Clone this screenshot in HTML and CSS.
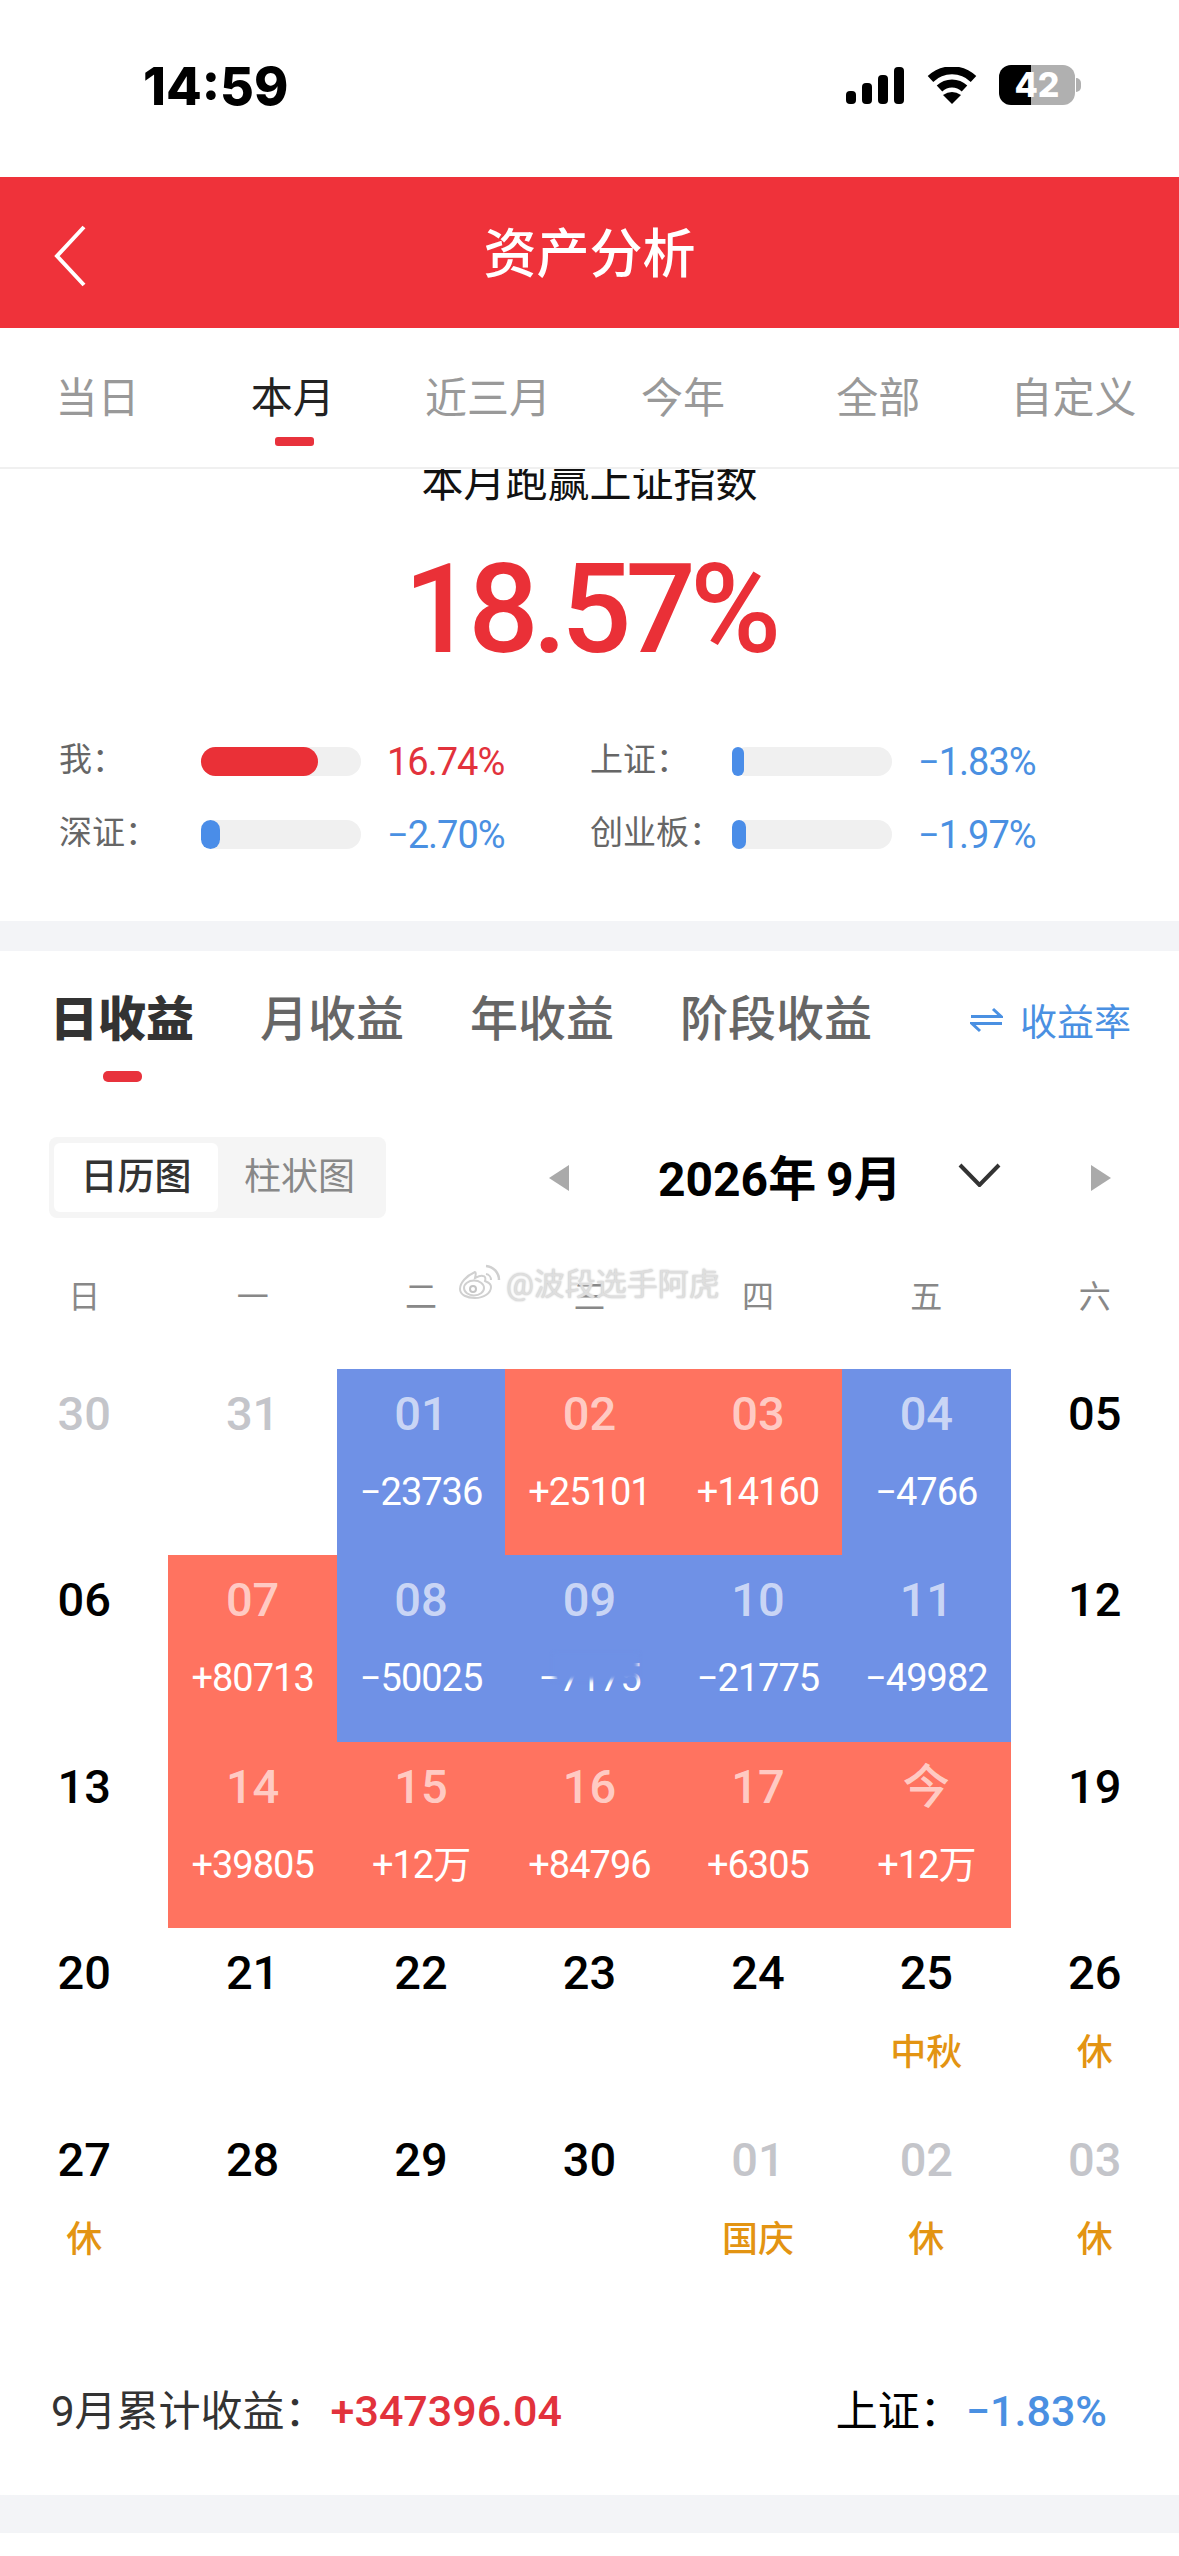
FILE: index.html
```html
<!DOCTYPE html>
<html lang="zh-CN">
<head>
    <meta charset="UTF-8">
    <meta name="viewport" content="width=device-width, initial-scale=1.0">
    <title>资产分析</title>
    <link rel="stylesheet" href="styles.css">
</head>
<body>

    <div class="status-bar">
        <div class="time">14:59</div>
        <div class="status-icons">
            <svg class="signal" width="58" height="37" viewBox="0 0 58 37">
                <rect x="0" y="24" width="10" height="13" rx="4"/>
                <rect x="16" y="16" width="10" height="21" rx="4"/>
                <rect x="32" y="8" width="10" height="29" rx="4"/>
                <rect x="48" y="0" width="10" height="37" rx="4"/>
            </svg>
            <svg class="wifi" width="50" height="37" viewBox="0 0 50 37">
                <path d="M3.5 12 A31 31 0 0 1 46.5 12" fill="none" stroke="#000" stroke-width="8"/>
                <path d="M12.5 21.5 A18 18 0 0 1 37.5 21.5" fill="none" stroke="#000" stroke-width="8"/>
                <path d="M25 37 L16 28 Q25 22 34 28 Z"/>
            </svg>
            <div class="battery">
                <div class="battery-body">42</div>
                <div class="battery-cap"></div>
            </div>
        </div>
    </div>

    <div class="nav">
        <svg class="back" width="34" height="62" viewBox="0 0 34 62">
            <path d="M31 2 L4 31 L31 60" fill="none" stroke="#fff" stroke-width="4"/>
        </svg>
        <div class="nav-title">资产分析</div>
    </div>

    <div class="period-tabs">
        <div class="period">当日</div>
        <div class="period active">本月<span class="period-mark"></span></div>
        <div class="period">近三月</div>
        <div class="period">今年</div>
        <div class="period">全部</div>
        <div class="period">自定义</div>
    </div>

    <div class="overview">
        <div class="overview-title">本月跑赢上证指数</div>
        <div class="overview-num">18.57%</div>
        <div class="stats">
            <div class="stat">
                <div class="stat-label">我：</div>
                <div class="bar"><div class="bar-fill red" style="width: 117px"></div></div>
                <div class="stat-val up">16.74%</div>
            </div>
            <div class="stat">
                <div class="stat-label">上证：</div>
                <div class="bar"><div class="bar-fill blue" style="width: 12px"></div></div>
                <div class="stat-val down">−1.83%</div>
            </div>
            <div class="stat">
                <div class="stat-label">深证：</div>
                <div class="bar"><div class="bar-fill blue" style="width: 19px"></div></div>
                <div class="stat-val down">−2.70%</div>
            </div>
            <div class="stat">
                <div class="stat-label">创业板：</div>
                <div class="bar"><div class="bar-fill blue" style="width: 14px"></div></div>
                <div class="stat-val down">−1.97%</div>
            </div>
        </div>
    </div>

    <div class="band"></div>

    <div class="profit">
        <div class="profit-tabs">
            <div class="profit-tab active">日收益<span class="profit-mark"></span></div>
            <div class="profit-tab">月收益</div>
            <div class="profit-tab">年收益</div>
            <div class="profit-tab">阶段收益</div>
            <div class="rate-switch">
                <svg width="33" height="26" viewBox="0 0 33 26">
                    <path d="M1 9.5 H31 L23 2" fill="none" stroke="#4a90e2" stroke-width="3"/>
                    <path d="M32 16.5 H2 L10 24" fill="none" stroke="#4a90e2" stroke-width="3"/>
                </svg>
                <span>收益率</span>
            </div>
        </div>

        <div class="toolbar">
            <div class="segment">
                <div class="segment-item active">日历图</div>
                <div class="segment-item">柱状图</div>
            </div>
            <svg class="arrow-left" width="20" height="26" viewBox="0 0 20 26"><path d="M20 0 V26 L0 13 Z" fill="#aaa"/></svg>
            <div class="month">2026年 9月</div>
            <svg class="chevron" width="43" height="24" viewBox="0 0 43 24"><path d="M2 2 L21.5 22 L41 2" fill="none" stroke="#333" stroke-width="4"/></svg>
            <svg class="arrow-right" width="20" height="26" viewBox="0 0 20 26"><path d="M0 0 V26 L20 13 Z" fill="#aaa"/></svg>
        </div>

        <div class="weekdays">
            <div>日</div><div>一</div><div>二</div><div>三</div><div>四</div><div>五</div><div>六</div>
        </div>

        <div class="calendar">
            <div class="cell muted"><div class="day">30</div></div>
            <div class="cell muted"><div class="day">31</div></div>
            <div class="cell loss"><div class="day">01</div><div class="val">−23736</div></div>
            <div class="cell gain"><div class="day">02</div><div class="val">+25101</div></div>
            <div class="cell gain"><div class="day">03</div><div class="val">+14160</div></div>
            <div class="cell loss"><div class="day">04</div><div class="val">−4766</div></div>
            <div class="cell"><div class="day">05</div></div>

            <div class="cell"><div class="day">06</div></div>
            <div class="cell gain"><div class="day">07</div><div class="val">+80713</div></div>
            <div class="cell loss"><div class="day">08</div><div class="val">−50025</div></div>
            <div class="cell loss"><div class="day">09</div><div class="val">−7175<span class="smudge"></span></div></div>
            <div class="cell loss"><div class="day">10</div><div class="val">−21775</div></div>
            <div class="cell loss"><div class="day">11</div><div class="val">−49982</div></div>
            <div class="cell"><div class="day">12</div></div>

            <div class="cell"><div class="day">13</div></div>
            <div class="cell gain"><div class="day">14</div><div class="val">+39805</div></div>
            <div class="cell gain"><div class="day">15</div><div class="val">+12万</div></div>
            <div class="cell gain"><div class="day">16</div><div class="val">+84796</div></div>
            <div class="cell gain"><div class="day">17</div><div class="val">+6305</div></div>
            <div class="cell gain"><div class="day">今</div><div class="val">+12万</div></div>
            <div class="cell"><div class="day">19</div></div>

            <div class="cell"><div class="day">20</div></div>
            <div class="cell"><div class="day">21</div></div>
            <div class="cell"><div class="day">22</div></div>
            <div class="cell"><div class="day">23</div></div>
            <div class="cell"><div class="day">24</div></div>
            <div class="cell"><div class="day">25</div><div class="note">中秋</div></div>
            <div class="cell"><div class="day">26</div><div class="note">休</div></div>

            <div class="cell"><div class="day">27</div><div class="note">休</div></div>
            <div class="cell"><div class="day">28</div></div>
            <div class="cell"><div class="day">29</div></div>
            <div class="cell"><div class="day">30</div></div>
            <div class="cell muted"><div class="day">01</div><div class="note">国庆</div></div>
            <div class="cell muted"><div class="day">02</div><div class="note">休</div></div>
            <div class="cell muted"><div class="day">03</div><div class="note">休</div></div>
        </div>

        <div class="totals">
            <div class="total">9月累计收益：<span class="total-val up">+347396.04</span></div>
            <div class="total index">上证：<span class="total-val down">−1.83%</span></div>
        </div>
    </div>

    <div class="band band-bottom"></div>

    <div class="watermark">
        <svg width="44" height="37" viewBox="0 0 44 37">
            <path d="M17 9 C8 13 2 20 2 26 C2 32 9 35 17 35 C26 35 33 30 33 24 C33 20 29 19 27 18 C28 15 27 13 25 13 C22 12 19 14 17 15 C18 11 18 9 17 9 Z" fill="#fff" stroke="#d0d0d0" stroke-width="2"/>
            <ellipse cx="16" cy="25" rx="10" ry="7.5" fill="none" stroke="#d0d0d0" stroke-width="2"/>
            <circle cx="15" cy="26" r="3" fill="none" stroke="#c4c4c4" stroke-width="2"/>
            <path d="M28 11 A6 6 0 0 1 33 17" fill="none" stroke="#d0d0d0" stroke-width="2"/>
            <path d="M28 3 A14 14 0 0 1 41 17" fill="none" stroke="#d0d0d0" stroke-width="2.5"/>
        </svg>
        <span>@波段选手阿虎</span>
    </div>

</body>
</html>
```

FILE: styles.css
```css
* {
    box-sizing: border-box;
}

body {
    position: relative;
    width: 1179px;
    height: 2556px;
    margin: 0;
    overflow: hidden;
    background: #fff;
    font-family: Roboto, "Noto Sans CJK SC", sans-serif;
    text-spacing-trim: space-all;
}

.status-bar {
    display: flex;
    justify-content: space-between;
    height: 177px;
    padding: 57px 98px 0 143px;
}

.time {
    font-family: Inter, sans-serif;
    font-size: 52px;
    font-weight: 800;
    line-height: 60px;
    color: #000;
}

.status-icons {
    display: flex;
    align-items: flex-start;
    padding-top: 10px;
}

.wifi {
    margin-left: 23px;
}

.battery {
    display: flex;
    align-items: center;
    margin: -2px 0 0 22px;
}

.battery-body {
    width: 76px;
    height: 40px;
    border-radius: 12px;
    background: linear-gradient(90deg, #000 32px, #b0b0b0 32px);
    font-family: Inter, sans-serif;
    font-size: 34px;
    font-weight: 800;
    line-height: 40px;
    text-align: center;
    color: #fff;
}

.battery-cap {
    width: 5px;
    height: 14px;
    margin-left: 1px;
    border-radius: 0 7px 7px 0;
    background: #b0b0b0;
}

.nav {
    position: relative;
    display: flex;
    align-items: center;
    justify-content: center;
    height: 151px;
    padding-bottom: 6px;
    background: #ef323a;
}

.back {
    position: absolute;
    left: 53px;
    top: 48px;
}

.nav-title {
    font-size: 53px;
    font-weight: 500;
    color: #fff;
}

.period-tabs {
    display: grid;
    grid-template-columns: repeat(6, 1fr);
    height: 141px;
    padding: 46px 8px 0 0;
    border-bottom: 2px solid #f0f0f0;
}

.period {
    display: flex;
    flex-direction: column;
    align-items: center;
    font-size: 42px;
    line-height: 50px;
    color: #999;
}

.period.active {
    color: #222;
}

.period-mark {
    width: 39px;
    height: 9px;
    margin: 13px 0 0 3px;
    border-radius: 3px;
    background: #e8323c;
}

.overview {
    height: 452px;
    overflow: hidden;
}

.overview-title {
    margin-top: -16px;
    font-size: 42px;
    line-height: 60px;
    text-align: center;
    color: #111;
}

.overview-num {
    margin-top: 27px;
    font-size: 124px;
    font-weight: 500;
    line-height: 140px;
    letter-spacing: -6px;
    text-align: center;
    color: #ea3037;
}

.stats {
    display: grid;
    grid-template-columns: repeat(2, 531px);
    row-gap: 44px;
    margin-top: 67px;
    padding-left: 59px;
}

.stat {
    display: flex;
    align-items: center;
    height: 29px;
}

.stat-label {
    width: 142px;
    margin-top: -5px;
    font-size: 33px;
    line-height: 29px;
    white-space: nowrap;
    color: #666;
}

.bar {
    width: 160px;
    height: 29px;
    border-radius: 15px;
    background: #f0f0f0;
}

.bar-fill {
    height: 100%;
    border-radius: 15px;
}

.bar-fill.red {
    background: #ea3037;
}

.bar-fill.blue {
    background: #4a8de8;
}

.stat-val {
    margin-left: 26px;
    font-size: 38px;
    letter-spacing: -1px;
}

.up {
    color: #e2323c;
}

.down {
    color: #4a90e2;
}

.band {
    height: 30px;
    background: #f3f4f7;
}

.band-bottom {
    height: 38px;
}

.profit {
    height: 1544px;
}

.profit-tabs {
    display: flex;
    gap: 66px;
    height: 131px;
    padding: 39px 48px 0 50px;
}

.profit-tab {
    display: flex;
    flex-direction: column;
    align-items: center;
    font-size: 48px;
    font-weight: 500;
    line-height: 60px;
    color: #666;
}

.profit-tab.active {
    font-weight: 900;
    color: #333;
}

.profit-mark {
    width: 39px;
    height: 11px;
    margin-top: 21px;
    border-radius: 5px;
    background: #e8323c;
}

.rate-switch {
    display: flex;
    align-items: center;
    gap: 17px;
    height: 60px;
    margin-left: auto;
    font-size: 37px;
    color: #4a90e2;
}

.toolbar {
    display: flex;
    align-items: center;
    height: 81px;
    margin-top: 55px;
    padding-left: 49px;
}

.segment {
    display: flex;
    width: 337px;
    height: 81px;
    padding: 6px 5px;
    border-radius: 8px;
    background: #f5f5f5;
}

.segment-item {
    flex: 1;
    font-size: 37px;
    line-height: 70px;
    text-align: center;
    color: #888;
}

.segment-item.active {
    flex: 0 0 164px;
    border-radius: 6px;
    background: #fff;
    font-weight: 500;
    color: #333;
}

.arrow-left {
    margin-left: 163px;
}

.month {
    margin: -5px 0 0 89px;
    font-size: 48px;
    font-weight: 700;
    word-spacing: -2px;
    color: #000;
}

.chevron {
    margin: -6px 0 0 56px;
}

.arrow-right {
    margin-left: 90px;
}

.weekdays {
    display: grid;
    grid-template-columns: repeat(7, 1fr);
    margin-top: 59px;
    font-size: 32px;
    line-height: 40px;
    text-align: center;
    color: #888;
}

.calendar {
    display: grid;
    grid-template-columns: repeat(7, 1fr);
    grid-auto-rows: 186.4px;
    margin-top: 52px;
}

.cell {
    display: flex;
    flex-direction: column;
    align-items: center;
    padding-top: 19px;
    color: #000;
}

.cell.muted {
    color: #c4c5ca;
}

.cell.gain {
    background: #ff7360;
}

.cell.loss {
    background: #6f91e6;
}

.day {
    font-size: 47px;
    font-weight: 500;
    line-height: 52px;
}

.gain .day,
.loss .day {
    color: rgba(255, 255, 255, 0.65);
}

.val {
    position: relative;
    margin-top: 30px;
    font-size: 38px;
    line-height: 44px;
    letter-spacing: -1px;
    color: #fff;
}

.note {
    margin-top: 32px;
    font-size: 36px;
    font-weight: 500;
    line-height: 44px;
    color: #e39412;
}

/* the source image has this number half wiped */
.smudge {
    position: absolute;
    left: 16px;
    top: -2px;
    width: 84px;
    height: 26px;
    background: #6f91e6;
    filter: blur(2px);
}

.totals {
    display: flex;
    justify-content: space-between;
    margin-top: 80px;
    padding: 0 72px 0 51px;
}

.total {
    font-size: 42px;
    line-height: 60px;
    color: #333;
}

.total.index {
    color: #000;
}

.total-val {
    margin-left: 4px;
    font-size: 43px;
    font-weight: 500;
}

.watermark {
    position: absolute;
    left: 458px;
    top: 1259px;
    display: flex;
    align-items: center;
    gap: 4px;
    font-size: 31px;
    color: #dedede;
    text-shadow: 0 0 2px #bbb, 0 0 1px #fff;
}
```
